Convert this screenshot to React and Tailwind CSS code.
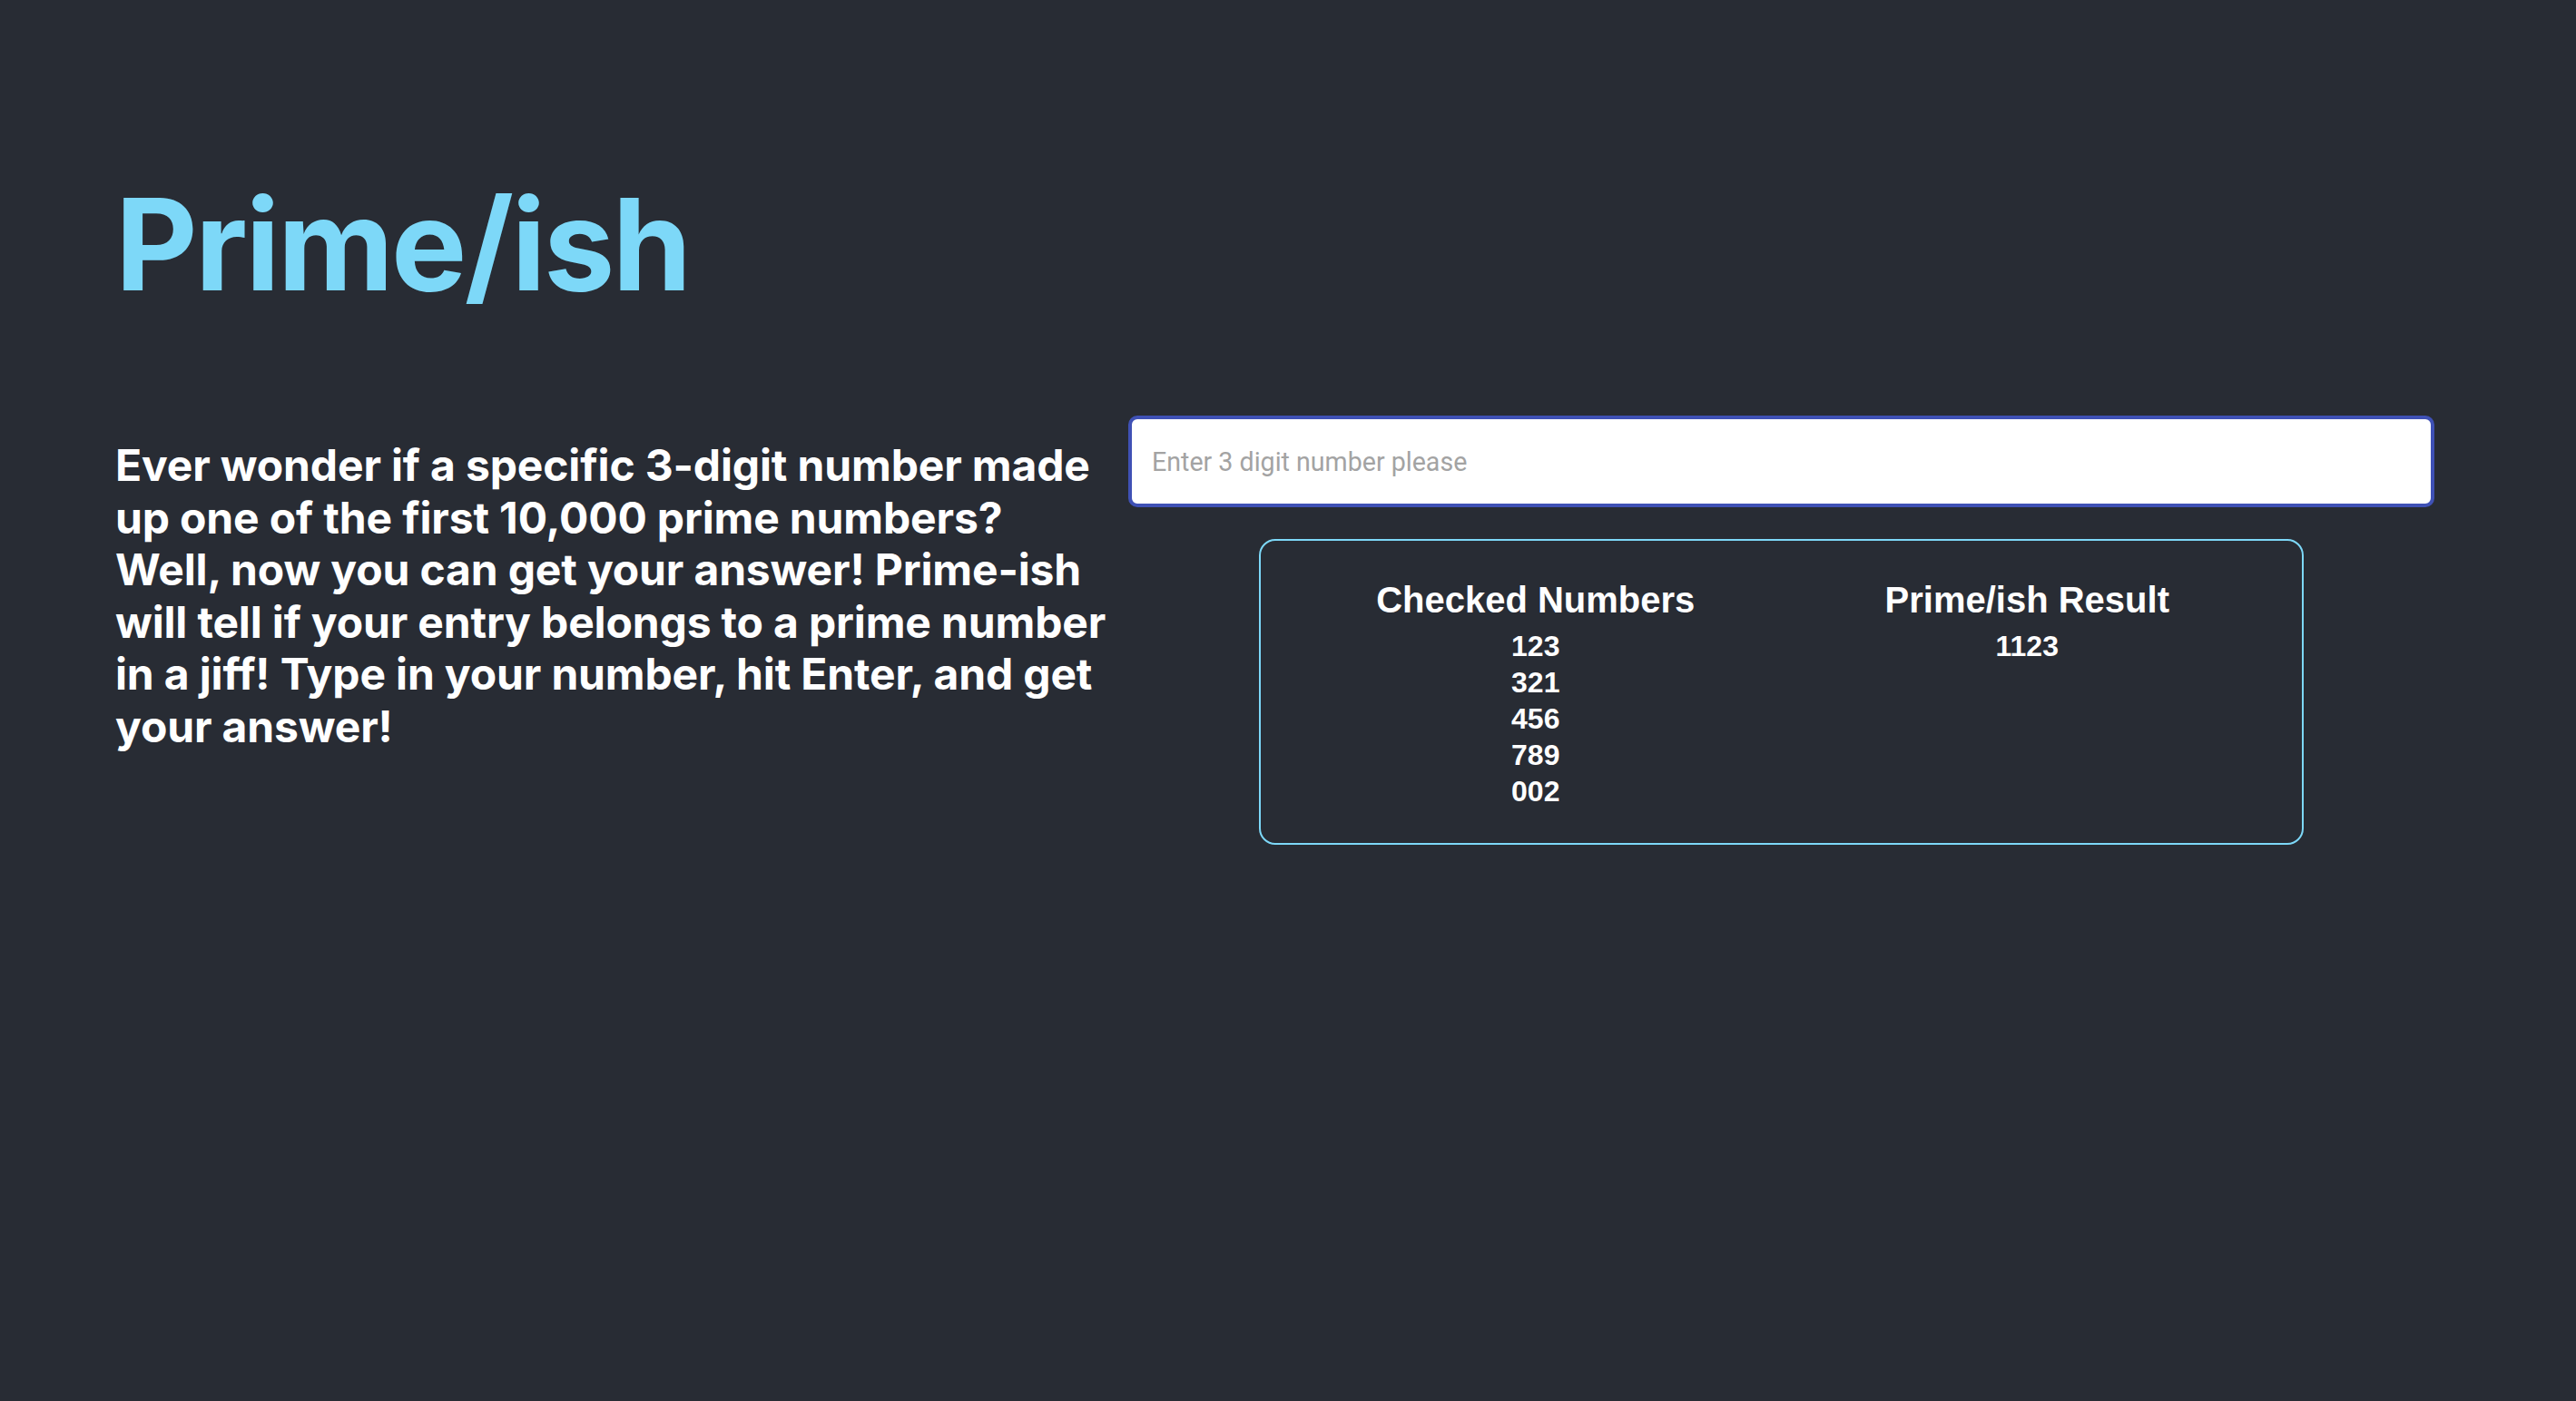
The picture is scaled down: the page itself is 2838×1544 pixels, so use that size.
import { useState } from "react";

const checked = ["123", "321", "456", "789", "002"];
const results = ["1123"];

export default function App() {
  const [value, setValue] = useState("");

  return (
    <div className="min-h-screen w-full bg-[#282c34] text-white font-['Inter',sans-serif]">
      <div className="pl-[127px] pt-[199px]">
        <h1 className="text-[140px] font-bold leading-none tracking-[-2.6px] text-[#7dd8f8]">
          Prime/ish
        </h1>
      </div>

      <div className="flex items-start pl-[127px] pt-[119px]">
        <p className="mt-[26px] w-[1098px] shrink-0 text-[48px] font-bold leading-[1.2] tracking-[-0.15px]">
          Ever wonder if a specific 3-digit number made up one of the first
          10,000 prime numbers? Well, now you can get your answer! Prime-ish
          will tell if your entry belongs to a prime number in a jiff! Type in
          your number, hit Enter, and get your answer!
        </p>

        <div className="ml-[18px] w-[1439px] shrink-0">
          <input
            type="text"
            value={value}
            onChange={(e) => setValue(e.target.value)}
            placeholder="Enter 3 digit number please"
            className="h-[101px] w-full rounded-[10px] border-4 border-[#3f51b5] bg-white px-[22px] font-['Roboto',sans-serif] text-[28.6px] text-gray-900 placeholder:text-[#a3a3a3] outline-none"
          />

          <div className="mx-auto mt-[35px] w-[1151px] rounded-[18px] border-2 border-[#7dd8f8] px-[32px] pt-[42px] pb-[37px] font-['Liberation_Sans',Arial,sans-serif] font-bold">
            <div className="grid grid-cols-2 text-center">
              <div>
                <div className="text-[40px] leading-[46px]">Checked Numbers</div>
                <div className="mt-[8px]">
                  {checked.map((n) => (
                    <div key={n} className="text-[32px] leading-[40px]">
                      {n}
                    </div>
                  ))}
                </div>
              </div>
              <div>
                <div className="text-[40px] leading-[46px]">Prime/ish Result</div>
                <div className="mt-[8px]">
                  {results.map((n) => (
                    <div key={n} className="text-[32px] leading-[40px]">
                      {n}
                    </div>
                  ))}
                </div>
              </div>
            </div>
          </div>
        </div>
      </div>
    </div>
  );
}
